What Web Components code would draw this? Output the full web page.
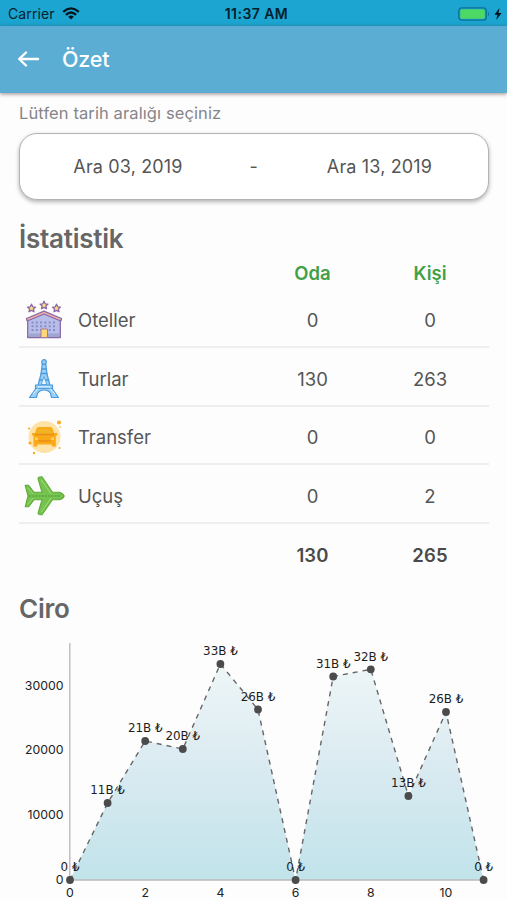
<!DOCTYPE html>
<html lang="tr">
<head>
<meta charset="utf-8">
<title>Özet</title>
<style>
html,body{margin:0;padding:0}
body{width:507px;height:900px;overflow:hidden;background:#fdfdfd;font-family:Inter,"Liberation Sans",sans-serif;color:#555}
</style>
</head>
<body>
<summary-screen></summary-screen>
<script>
function define(name, html, setup) {
  customElements.define(name, class extends HTMLElement {
    constructor() {
      super();
      this.attachShadow({mode: 'open'}).innerHTML = html;
    }
    connectedCallback() { if (setup) setup(this, this.shadowRoot); }
  });
}

define('status-bar', `
<style>
:host{display:grid;grid-template-columns:1fr auto 1fr;align-items:center;height:25.5px;box-sizing:border-box;padding:2px 5px 0 8px;background:#1ba5d0;color:#06222d;font-size:14px}
.l,.r{display:flex;align-items:center}
.l{gap:7px;letter-spacing:.1px}
.r{justify-content:flex-end;gap:3px}
.time{font-weight:600;font-size:14px;letter-spacing:.45px;color:#04202b;padding-left:3px}
svg{display:block}
</style>
<div class="l"><span>Carrier</span>
<svg width="18" height="13" viewBox="0 0 18 13" fill="none" stroke="#04161d" stroke-width="2.3"><path d="M1.2 4.8Q9-2 16.8 4.8M3.9 7.8Q9 3.2 14.1 7.8"/><path d="M9 12.4 6.2 9.7Q9 7.5 11.8 9.7Z" fill="#04161d" stroke="none"/></svg></div>
<div class="time">11:37 AM</div>
<div class="r"><svg width="33" height="14" viewBox="0 0 33 14"><rect x=".8" y=".8" width="27.4" height="12.4" rx="3" fill="none" stroke="#0e6f94" stroke-width="1.3"/><rect x="2.3" y="2.3" width="24.5" height="9.4" rx="1.5" fill="#4cd964"/><path d="M30 4.8q2 2.2 0 4.4z" fill="#0e6f94"/></svg>
<svg width="8" height="12" viewBox="0 0 8 12"><path d="M5.5 0 .4 6.8h3L2.2 12 7.6 4.9H4.5Z" fill="#04161d"/></svg></div>`);

define('app-header', `
<style>
:host{display:flex;align-items:center;gap:22px;height:67px;box-sizing:border-box;padding:0 18px;background:#5badd4;color:#fff;position:relative;box-shadow:0 1px 4px rgba(70,40,40,.55)}
svg{display:block}
span{font-size:21.5px;font-weight:500;letter-spacing:-.2px}
</style>
<svg width="22" height="16" viewBox="0 0 22 16" fill="none" stroke="#fff" stroke-width="2.4" stroke-linecap="round" stroke-linejoin="round"><path d="M20 8H1.5M8 1.5 1.2 8 8 14.5"/></svg>
<span><slot></slot></span>`);

define('date-range', `
<style>
:host{display:grid;grid-template-columns:216px 1fr 216px;align-items:center;height:67px;box-sizing:border-box;border:1.5px solid #b3b3b3;border-radius:18px;background:#fff;box-shadow:0 2px 4px rgba(0,0,0,.3);font-size:18px;text-align:center;color:#555;letter-spacing:.15px}
</style>
<slot name="from"></slot><span>-</span><slot name="to"></slot>`);

define('section-title', `
<style>:host{display:block;font-size:26px;line-height:32px;font-weight:600;color:#666;letter-spacing:-.25px}</style>
<slot></slot>`);

const icons = {
hotel: `<g stroke="#8b68a8" stroke-width="1.3" stroke-linejoin="round">
<g fill="#ffe17d"><path d="M7.5 4.2 8.7 6.8 11.5 7.1 9.4 9 10 11.8 7.5 10.4 5 11.8 5.6 9 3.5 7.1 6.3 6.8Z"/><path d="M20 1.2 21.2 3.8 24 4.1 21.9 6 22.5 8.8 20 7.4 17.5 8.8 18.1 6 16 4.1 18.8 3.8Z"/><path d="M32.5 4.2 33.7 6.8 36.5 7.1 34.4 9 35 11.8 32.5 10.4 30 11.8 30.6 9 28.5 7.1 31.3 6.8Z"/></g>
<path d="M3.7 20H36.3V37.5H3.7Z" fill="#b7bce9"/><path d="M4 21.5V19.5L20 12.5 36 19.5V21.5Z" fill="#b7bce9" stroke="none"/><path d="M2.5 18.5 20 11.2 37.5 18.5 36.8 21 20 14 3.2 21Z" fill="#efb2a6"/></g>
<path d="M5 33.5H35V37H5Z" fill="#9ea5cf"/><path d="M7.5 22.5H33M7.5 26.2H33M7.5 30H33" stroke="#868dc6" stroke-width="2" stroke-dasharray="2 2.3"/><path d="M17 29H23.5V37.5H17Z" fill="#ffd875" stroke="#a97994"/>`,
tower: `<g fill="#9bd0f4" stroke="#4b9add" stroke-width="1.2" stroke-linejoin="round"><path d="M18.2 5H21.8L23 15 26 26.5 34.5 38.5H27.5Q27 31 20 31T12.5 38.5H5.5L14 26.5 17 15Z"/><circle cx="20" cy="3" r="2.3"/><path d="M17 10H23M16.6 14.5H23.4M14.8 21H25.2" stroke-width="1.5"/><path d="M11.5 26H28.5V29.5H11.5Z"/><path d="M17.2 25.5 20 17.5 22.8 25.5Z" fill="#e6f6ff" stroke-width=".8"/></g><path d="M9 35 14 29.5M31 35 26 29.5M14 27.8H26" stroke="#e0f3ff" stroke-width="1"/>`,
car: `<circle cx="20.5" cy="20" r="16" fill="#fee2a6"/><g fill="#f9a91a"><path d="M12.5 11.5Q13.2 10 15 10H26Q28 10 28.6 11.5L30 16H33L33.5 18 31.8 19V29.5H27.8V27.5H13.2V29.5H9.5V19L7.8 18 8.3 16H11Z"/><circle cx="35" cy="5.5" r="2"/><circle cx="5" cy="11.5" r="1.1"/><circle cx="10" cy="36" r="1.2"/><circle cx="6" cy="26" r="1.5"/><circle cx="35.5" cy="31" r="1"/></g><path d="M12.5 17.2 14 12.5H27L28.5 17.2Z" fill="#f1b423"/><path d="M11 17.5H30M14.5 24H26.5" stroke="#e78e13" stroke-width="1.4"/><path d="M11 20 14 21.3V23H11ZM30 20 27 21.3V23H30Z" fill="#ffd25a"/><circle cx="36" cy="10" r=".8" fill="#f9a91a"/>`,
plane: `<path d="M1.2 9.3H4.5L10 16.3H18L14 2.5Q14.2 .6 18 .8L28.5 16.2H35Q39 17 40.2 20 39 23 35 23.8H28.5L18 38.7Q14.2 39 14 37.3L18 23.7H10L4.5 30.8H1.2L4 20Z" fill="#77c34f" stroke="#5eac3c" stroke-width="1.1" stroke-linejoin="round"/><path d="M5 20H36" stroke="#4b963c" stroke-width="1.2" stroke-dasharray="2 1.2"/><path d="M17.5 4 27 18M17.5 36 27 22M3.5 11.5 9 18M3.5 28.5 9 22" stroke="#a0da72" stroke-width="1"/>`
};

define('stat-row', `
<style>
:host{display:grid;grid-template-columns:59px 175.5px 118px 117px;align-items:center;height:58.6px;box-sizing:border-box;border-bottom:2px solid #eee;padding-top:4px;font-size:18.5px;color:#555}
:host([head]){height:35px;border:0;padding:1px 0 0;color:#43a047;font-weight:600}
:host([total]){border:0;padding-top:3px;font-weight:600;color:#4a4a4a}
svg{display:block;margin-left:4.6px;overflow:visible}
.n{text-align:center;letter-spacing:0}
:host([total]) .n{letter-spacing:.15px}
.name{letter-spacing:-.02px}
</style>
<div class="i"></div><div class="name"><slot></slot></div><div class="n a"></div><div class="n b"></div>`,
(el, root) => {
  const icon = icons[el.getAttribute('icon')];
  if (icon) root.querySelector('.i').innerHTML = `<svg width="41" height="40" viewBox="0 0 41 40" fill="none">${icon}</svg>`;
  root.querySelector('.a').textContent = el.getAttribute('rooms');
  root.querySelector('.b').textContent = el.getAttribute('people');
});

define('revenue-chart', `
<style>:host{display:block;height:264px}svg{display:block}
.axis{font:12.3px Inter,"Liberation Sans",sans-serif;fill:#222}
.val{font:11.9px "DejaVu Sans",sans-serif;fill:#1c1c1c;text-anchor:middle}</style>
<svg width="507" height="264" viewBox="0 636 507 264">
<defs><linearGradient id="g" gradientUnits="userSpaceOnUse" x1="0" y1="664" x2="0" y2="880"><stop stop-color="#eef6f7"/><stop offset=".5" stop-color="#d9eaf1"/><stop offset="1" stop-color="#c1e3ea"/></linearGradient></defs>
<g id="plot"></g></svg>`, (el, root) => {
  const ys = [880,803,741,749,664,709.5,880,676.5,669.3,796,712,880];
  const labels = ['0','11B','21B','20B','33B','26B','0','31B','32B','13B','26B','0'];
  const pts = ys.map((y, i) => [70 + i * 37.6, y]);
  const line = pts.map(p => p.join(',')).join(' ');
  let s = `<polygon points="${line}" fill="url(#g)"/><path d="M69.8 643V880H484" fill="none" stroke="#bbb" stroke-width="1.4"/><polyline points="${line}" fill="none" stroke="#666" stroke-width="1.4" stroke-dasharray="5 5"/>`;
  pts.forEach((p, i) => s += `<circle cx="${p[0]}" cy="${p[1]}" r="3.9" fill="#4b4b4b"/><text class="val" x="${p[0]}" y="${p[1] - 8.6}">${labels[i]} ₺</text>`);
  [[0,883.5],[10000,819],[20000,754],[30000,690]].forEach(t => s += `<text class="axis" text-anchor="end" x="63.5" y="${t[1]}">${t[0]}</text>`);
  for (let i = 0; i <= 10; i += 2) s += `<text class="axis" text-anchor="middle" x="${pts[i][0]}" y="897">${i}</text>`;
  root.querySelector('#plot').innerHTML = s;
});

define('summary-screen', `
<style>
:host{display:flex;flex-direction:column;width:507px;height:900px;overflow:hidden}
main{padding:0 18.5px 0 19px}
.hint{font-size:16.5px;line-height:20px;color:#85858a;padding:10.5px 0 10px;letter-spacing:.1px}
.t1{margin-top:22.7px}
.t2{margin-top:9.9px}
revenue-chart{margin-top:11px}
</style>
<status-bar></status-bar>
<app-header>Özet</app-header>
<main>
<div class="hint">Lütfen tarih aralığı seçiniz</div>
<date-range><span slot="from">Ara 03, 2019</span><span slot="to">Ara 13, 2019</span></date-range>
<section-title class="t1">İstatistik</section-title>
<stat-row head rooms="Oda" people="Kişi"></stat-row>
<stat-row icon="hotel" rooms="0" people="0">Oteller</stat-row>
<stat-row icon="tower" rooms="130" people="263">Turlar</stat-row>
<stat-row icon="car" rooms="0" people="0">Transfer</stat-row>
<stat-row icon="plane" rooms="0" people="2">Uçuş</stat-row>
<stat-row total rooms="130" people="265"></stat-row>
<section-title class="t2">Ciro</section-title>
</main>
<revenue-chart></revenue-chart>`);
</script>
</body>
</html>
